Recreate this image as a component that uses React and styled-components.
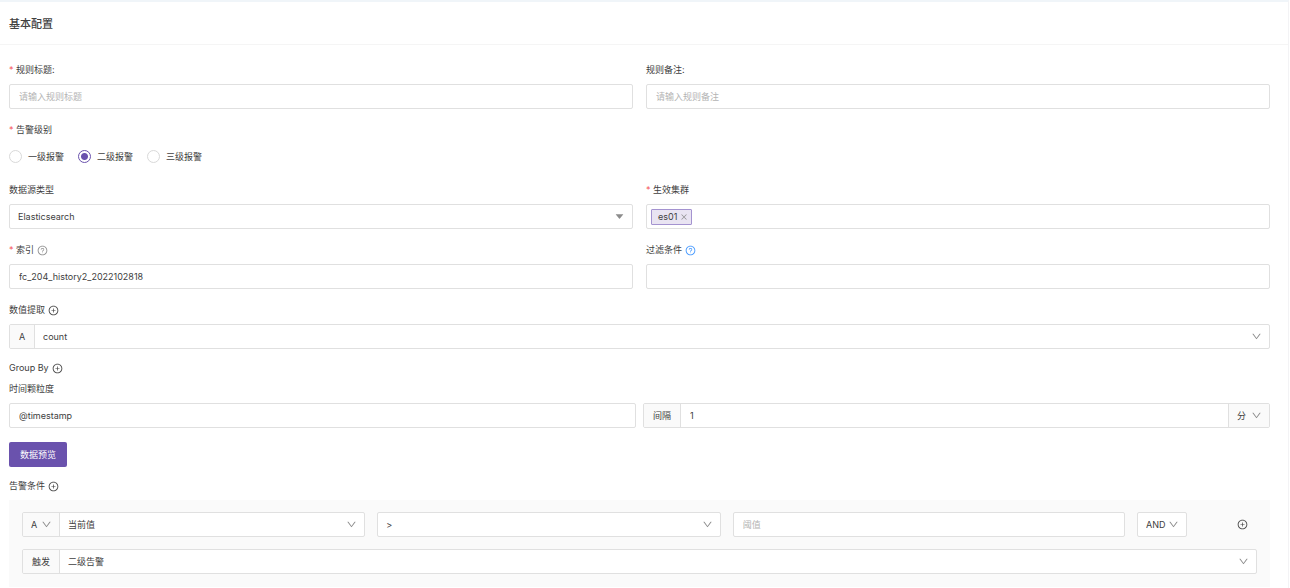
import React, { useState } from 'react';
import styled, { createGlobalStyle, ThemeProvider } from 'styled-components';
import {
    AiFillCaretDown,
    AiOutlineClose,
    AiOutlineDown,
    AiOutlinePlusCircle,
    AiOutlineQuestionCircle,
} from 'react-icons/ai';

const theme = {
    colors: {
        text: '#404040',
        placeholder: '#b4b4b4',
        border: '#e0e0e0',
        addon: '#fafafa',
        purple: '#6a52ad',
        tag: '#e9e4f2',
        tagBorder: '#a493d0',
        red: '#f5555a',
        blue: '#3b93ff',
        icon: '#8c8c8c',
    },
};

const GlobalStyle = createGlobalStyle`
    * {
        box-sizing: border-box;
    }
    body {
        margin: 0;
        background-color: #ffffff;
        color: ${({ theme }) => theme.colors.text};
        font: 9px/14px Inter, "Noto Sans CJK SC", sans-serif;
    }
    input, select, button {
        margin: 0;
        color: inherit;
        font: inherit;
    }
`;

const Card = styled.section`
    margin-right: 1px;
    border-top: 2px solid #f0f5f9;
    border-right: 1px solid #f3f3f5;
`;
const CardHeader = styled.header`
    padding: 12px 9px 10px;
    border-bottom: 1px solid #f5f5f5;
`;
const Title = styled.h2`
    margin: 0;
    font-size: 11px;
    font-weight: 500;
    line-height: 20px;
`;
const Form = styled.form`
    display: flex;
    flex-direction: column;
    gap: 14px;
    padding: 18px 18px 1px 9px;
`;
const Columns = styled.div`
    display: grid;
    grid-template-columns: 1fr 1fr;
    gap: ${({ gap }) => gap || 13}px;
`;
const FieldBox = styled.div`
    display: flex;
    flex-direction: column;
    gap: 7px;
    min-width: 0;
`;
const RadioSet = styled.fieldset`
    display: flex;
    flex-direction: column;
    gap: 7px;
    margin: 0;
    padding: 0;
    border: none;
`;
const Group = styled.div`
    display: flex;
    flex-direction: column;
    gap: ${({ gap }) => gap}px;
`;
const LabelRow = styled.div`
    display: flex;
    align-items: center;
    gap: 3px;
    height: 14px;
`;
const Star = styled.span`
    width: 4px;
    color: ${({ theme }) => theme.colors.red};
`;
const IconBtn = styled.button`
    display: flex;
    padding: 0;
    border: none;
    background-color: transparent;
    color: ${({ theme, tone }) => theme.colors[tone || 'text']};
    font-size: 11px;
    cursor: pointer;
`;

const Box = styled.div`
    display: flex;
    align-items: stretch;
    height: 25px;
    min-width: 0;
    overflow: hidden;
    border: 1px solid ${({ theme }) => theme.colors.border};
    border-radius: 2px;
    background-color: #ffffff;
`;
const TextInput = styled.input`
    flex: 1;
    width: 100%;
    min-width: 0;
    padding: 0 9px;
    border: none;
    outline: none;
    background-color: transparent;
    &::placeholder {
        color: ${({ theme }) => theme.colors.placeholder};
        opacity: 1;
    }
`;
const Addon = styled.div`
    display: flex;
    flex: none;
    align-items: center;
    justify-content: center;
    width: ${({ width }) => width}px;
    background-color: ${({ theme }) => theme.colors.addon};
    border: 0 solid ${({ theme }) => theme.colors.border};
    border-right-width: ${({ after }) => after ? 0 : 1}px;
    border-left-width: ${({ after }) => after ? 1 : 0}px;
`;

const SelectWrap = styled.div`
    display: grid;
    flex: 1;
    align-items: center;
    min-width: 0;
    height: 100%;
    color: ${({ theme }) => theme.colors.icon};
    font-size: 11px;
    > * {
        grid-area: 1 / 1;
    }
    > svg {
        justify-self: end;
        margin-right: 7px;
        pointer-events: none;
    }
`;
const NativeSelect = styled.select`
    width: 100%;
    height: 100%;
    padding: 0 8px;
    border: none;
    outline: none;
    appearance: none;
    background-color: transparent;
    color: ${({ theme }) => theme.colors.text};
    font-size: 9px;
    cursor: pointer;
`;

const Radios = styled.div`
    display: flex;
    align-items: center;
    gap: 14px;
    height: 25px;
`;
const RadioLabel = styled.label`
    display: flex;
    align-items: center;
    gap: 6px;
    cursor: pointer;
`;
const Radio = styled.input`
    width: 13px;
    height: 13px;
    border: 1px solid #d9d9d9;
    border-radius: 50%;
    appearance: none;
    background-color: #ffffff;
    &:checked {
        border-color: ${({ theme }) => theme.colors.purple};
        background-image: radial-gradient(circle, ${({ theme }) => theme.colors.purple} 3px, transparent 4px);
    }
`;

const Tag = styled.span`
    display: flex;
    align-items: center;
    align-self: center;
    gap: 3px;
    height: 16px;
    margin-left: 4px;
    padding: 0 3px 0 6px;
    border: 1px solid ${({ theme }) => theme.colors.tagBorder};
    border-radius: 1px;
    background-color: ${({ theme }) => theme.colors.tag};
    ${IconBtn} {
        font-size: 8px;
    }
`;

const PrimaryBtn = styled.button`
    align-self: flex-start;
    height: 25px;
    padding: 0 11px;
    border: none;
    border-radius: 2px;
    background-color: ${({ theme }) => theme.colors.purple};
    color: #ffffff;
    cursor: pointer;
`;
const Conditions = styled.div`
    display: flex;
    flex-direction: column;
    gap: 12px;
    padding: 12px 13px 13px;
    background-color: ${({ theme }) => theme.colors.addon};
`;
const ConditionRow = styled.div`
    display: grid;
    grid-template-columns: 7fr 7fr 8fr 50px 58px;
    align-items: center;
    gap: 12px;
    ${IconBtn} {
        justify-self: end;
        margin-right: 9px;
    }
`;

const PlusBtn = ({ label }) => (
    <IconBtn type="button" aria-label={label}><AiOutlinePlusCircle /></IconBtn>
);

const HelpBtn = ({ tone }) => (
    <IconBtn type="button" aria-label="帮助" tone={tone}><AiOutlineQuestionCircle /></IconBtn>
);

const Field = ({ id, label, required, extra, children }) => (
    <FieldBox>
        <LabelRow>
            {required && <Star>*</Star>}
            <label htmlFor={id}>{label}</label>
            {extra}
        </LabelRow>
        {children}
    </FieldBox>
);

const Select = ({ id, label, options, caret }) => (
    <SelectWrap>
        <NativeSelect id={id} aria-label={label}>
            {options.map(option => <option key={option}>{option}</option>)}
        </NativeSelect>
        {caret ? <AiFillCaretDown /> : <AiOutlineDown />}
    </SelectWrap>
);

const levels = ['一级报警', '二级报警', '三级报警'];

const App = () => {
    const [level, setLevel] = useState('二级报警');
    const [clusters, setClusters] = useState(['es01']);

    return (
        <ThemeProvider theme={theme}>
            <GlobalStyle />
            <Card>
                <CardHeader>
                    <Title>基本配置</Title>
                </CardHeader>
                <Form>
                    <Columns>
                        <Field id="title" label="规则标题:" required>
                            <Box><TextInput id="title" placeholder="请输入规则标题" /></Box>
                        </Field>
                        <Field id="remark" label="规则备注:">
                            <Box><TextInput id="remark" placeholder="请输入规则备注" /></Box>
                        </Field>
                    </Columns>

                    <RadioSet aria-labelledby="level">
                        <LabelRow><Star>*</Star><span id="level">告警级别</span></LabelRow>
                        <Radios>
                            {levels.map(name => (
                                <RadioLabel key={name}>
                                    <Radio type="radio" name="level" checked={level === name} onChange={() => setLevel(name)} />
                                    {name}
                                </RadioLabel>
                            ))}
                        </Radios>
                    </RadioSet>

                    <Columns>
                        <Field id="source" label="数据源类型">
                            <Box><Select id="source" options={['Elasticsearch']} caret /></Box>
                        </Field>
                        <Field id="cluster" label="生效集群" required>
                            <Box>
                                {clusters.map(name => (
                                    <Tag key={name}>
                                        {name}
                                        <IconBtn type="button" tone="icon" aria-label={`移除 ${name}`} onClick={() => setClusters(clusters.filter(item => item !== name))}>
                                            <AiOutlineClose />
                                        </IconBtn>
                                    </Tag>
                                ))}
                                <TextInput id="cluster" />
                            </Box>
                        </Field>
                    </Columns>

                    <Columns>
                        <Field id="index" label="索引" required extra={<HelpBtn tone="icon" />}>
                            <Box><TextInput id="index" defaultValue="fc_204_history2_2022102818" /></Box>
                        </Field>
                        <Field id="filter" label="过滤条件" extra={<HelpBtn tone="blue" />}>
                            <Box><TextInput id="filter" /></Box>
                        </Field>
                    </Columns>

                    <Group gap={12}>
                        <Field id="metric" label="数值提取" extra={<PlusBtn label="添加数值" />}>
                            <Box>
                                <Addon width={25}>A</Addon>
                                <Select id="metric" options={['count']} />
                            </Box>
                        </Field>
                        <Group gap={7}>
                            <LabelRow>Group By <PlusBtn label="添加分组" /></LabelRow>
                            <Field id="time" label="时间颗粒度">
                                <Columns gap={7}>
                                    <Box><TextInput id="time" defaultValue="@timestamp" /></Box>
                                    <Box>
                                        <Addon width={37}><label htmlFor="interval">间隔</label></Addon>
                                        <TextInput id="interval" defaultValue="1" />
                                        <Addon width={41} after>
                                            <Select label="时间单位" options={['分']} />
                                        </Addon>
                                    </Box>
                                </Columns>
                            </Field>
                        </Group>
                    </Group>

                    <Group gap={12}>
                        <PrimaryBtn type="button">数据预览</PrimaryBtn>
                        <Group gap={7}>
                            <LabelRow>告警条件 <PlusBtn label="添加告警条件" /></LabelRow>
                            <Conditions>
                                <ConditionRow>
                                    <Box>
                                        <Addon width={37}><Select label="数值" options={['A']} /></Addon>
                                        <Select label="取值" options={['当前值']} />
                                    </Box>
                                    <Box><Select label="比较" options={['>']} /></Box>
                                    <Box><TextInput aria-label="阈值" placeholder="阈值" /></Box>
                                    <Box><Select label="逻辑" options={['AND']} /></Box>
                                    <PlusBtn label="添加条件" />
                                </ConditionRow>
                                <Box>
                                    <Addon width={37}><label htmlFor="trigger">触发</label></Addon>
                                    <Select id="trigger" options={['二级告警']} />
                                </Box>
                            </Conditions>
                        </Group>
                    </Group>
                </Form>
            </Card>
        </ThemeProvider>
    );
};

export default App;
